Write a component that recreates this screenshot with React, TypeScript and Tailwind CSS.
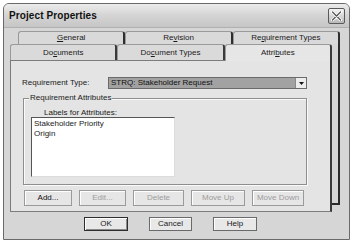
import React from 'react';

const backTabs = [
  { pre: '', key: 'G', post: 'eneral' },
  { pre: 'Re', key: 'v', post: 'ision' },
  { pre: 'Re', key: 'q', post: 'uirement Types' },
];

const frontTabs = [
  { pre: 'Do', key: 'c', post: 'uments', active: false },
  { pre: 'Do', key: 'c', post: 'ument Types', active: false },
  { pre: 'Attri', key: 'b', post: 'utes', active: true },
];

const actions = [
  { label: 'Add...', w: 'w-[48px]', enabled: true },
  { label: 'Edit...', w: 'w-[47px]', enabled: false },
  { label: 'Delete', w: 'w-[51px]', enabled: false },
  { label: 'Move Up', w: 'w-[54px]', enabled: false },
  { label: 'Move Down', w: 'w-[52px]', enabled: false },
];

const Mnemonic: React.FC<{ pre: string; k: string; post: string }> = ({ pre, k, post }) => (
  <span>
    {pre}
    <span className="underline underline-offset-1">{k}</span>
    {post}
  </span>
);

const App: React.FC = () => {
  return (
    <div className="w-[354px] h-[243px] bg-white pt-[3px] pl-[3px] font-['Liberation_Sans',Arial,sans-serif] text-[8px] leading-[10px] text-[#1a1a1a]">
      <div className="w-[347px] h-[237px] border border-[#6a6a6a] rounded-t-[6px] bg-[#d6d6d6] flex flex-col overflow-hidden">
        {/* title bar */}
        <div className="h-[24px] flex items-center justify-between pl-[5px] pr-[4px] bg-linear-to-b from-[#ececec] via-[#d4d4d4] to-[#c6c6c6] border-b border-[#b0b0b0]">
          <span className="text-[10px] font-bold text-[#111] tracking-[0.1px]">Project Properties</span>
          <div className="w-[17px] h-[16px] border border-[#5a5a5a] rounded-[2px] bg-linear-to-b from-[#f4f4f4] to-[#b8b8b8] flex items-center justify-center">
            <svg width="11" height="10" viewBox="0 0 11 10">
              <path d="M1.5 1 L9.5 9 M9.5 1 L1.5 9" stroke="#fff" strokeWidth="3" strokeLinecap="round" />
              <path d="M1.5 1 L9.5 9 M9.5 1 L1.5 9" stroke="#555" strokeWidth="1.3" strokeLinecap="round" />
            </svg>
          </div>
        </div>

        {/* back tab row + its panel */}
        <div className="mt-[3px] ml-[14px] w-[322px]">
          <div className="flex h-[13px]">
            {backTabs.map((t, i) => (
              <div
                key={i}
                className="flex-1 flex items-center justify-center bg-[#d9d9d9] border-t border-l border-[#9a9a9a] border-r-2 border-r-[#2e2e2e] rounded-t-[3px]"
              >
                <Mnemonic pre={t.pre} k={t.key} post={t.post} />
              </div>
            ))}
          </div>
          <div className="h-[161px] border-r-2 border-b-2 border-[#2a2a2a]">
            <div className="-ml-[8px] w-[322px]">
              <div className="flex h-[16px]">
                {frontTabs.map((t, i) => (
                  <div
                    key={i}
                    className={
                      t.active
                        ? 'flex-1 flex items-center justify-center bg-[#e6e6e6] border-t border-l border-[#9a9a9a] border-r-2 border-r-[#3a3a3a] rounded-t-[3px] -mb-px relative'
                        : 'flex-1 flex items-center justify-center bg-[#dadada] border-t border-l border-[#9a9a9a] border-r-2 border-r-[#3a3a3a] rounded-t-[3px]'
                    }
                  >
                    <Mnemonic pre={t.pre} k={t.key} post={t.post} />
                  </div>
                ))}
              </div>

              {/* attributes panel */}
              <div className="h-[152px] bg-[#e4e4e4] border border-[#7c7c7c] border-r-2 border-r-[#3a3a3a] pt-[16px]">
                <div className="flex items-center h-[12px]">
                  <span className="ml-[11px] w-[86px]">Requirement Type:</span>
                  <div className="w-[199px] h-[12px] bg-[#a2a2a2] border border-[#6a6a6a] flex items-center">
                    <span className="flex-1 pl-[2px] text-[#111]">STRQ: Stakeholder Request</span>
                    <div className="w-[11px] h-[10px] bg-[#ececec] border-l border-[#8a8a8a] flex items-center justify-center">
                      <svg width="5" height="3" viewBox="0 0 5 3">
                        <path d="M0 0 H5 L2.5 3 Z" fill="#111" />
                      </svg>
                    </div>
                  </div>
                </div>

                {/* group box */}
                <div className="relative mt-[9px] ml-[12px] w-[284px] h-[87px] border border-[#8e8e8e] shadow-[inset_1px_1px_0_#fafafa,1px_1px_0_#fafafa] pl-[7px] pt-[9px]">
                  <span className="absolute -top-[6px] left-[5px] px-[1px] bg-[#e4e4e4]">Requirement Attributes</span>
                  <div className="ml-[13px] h-[9px]">Labels for Attributes:</div>
                  <div className="w-[144px] h-[60px] bg-white border border-[#dcdcdc] border-t-[#555] border-l-[#555] pl-[2px] pt-[1px]">
                    <div>Stakeholder Priority</div>
                    <div>Origin</div>
                  </div>
                </div>

                <div className="flex mt-[5px] ml-[13px] gap-[7px] h-[16px]">
                  {actions.map((a) => (
                    <div
                      key={a.label}
                      className={`${a.w} h-[16px] flex items-center justify-center bg-[#e6e6e6] border border-[#9a9a9a] shadow-[inset_1px_1px_0_#fff] ${
                        a.enabled ? 'text-[#111]' : 'text-[#9c9c9c]'
                      }`}
                    >
                      {a.label}
                    </div>
                  ))}
                </div>
              </div>
            </div>
          </div>
        </div>

        {/* dialog buttons */}
        <div className="flex mt-[12px] ml-[80px] gap-[21px]">
          <div className="w-[44px] h-[14px] flex items-center justify-center bg-[#e8e8e8] border border-[#2e2e2e] shadow-[inset_1px_1px_0_#fff,inset_-1px_-1px_0_#8a8a8a]">
            OK
          </div>
          <div className="w-[43px] h-[14px] flex items-center justify-center bg-[#e8e8e8] border border-[#6a6a6a] shadow-[inset_1px_1px_0_#fff]">
            Cancel
          </div>
          <div className="w-[44px] h-[14px] flex items-center justify-center bg-[#e8e8e8] border border-[#6a6a6a] shadow-[inset_1px_1px_0_#fff]">
            Help
          </div>
        </div>
      </div>
    </div>
  );
};

export default App;
